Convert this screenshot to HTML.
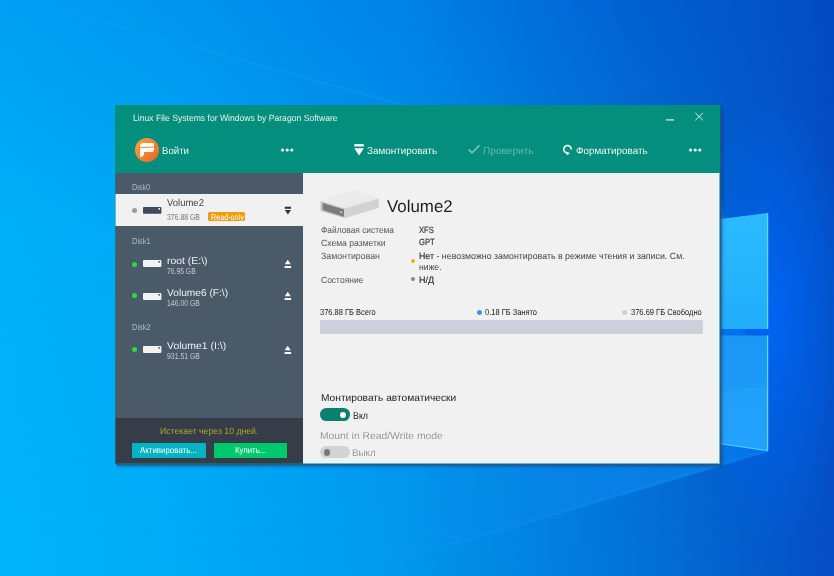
<!DOCTYPE html>
<html><head><meta charset="utf-8">
<style>
*{margin:0;padding:0;box-sizing:border-box}
html,body{width:834px;height:576px;overflow:hidden;font-family:"Liberation Sans",sans-serif}
body{position:relative;background:#0a7ee0}
#bg{position:absolute;left:0;top:0}
#win{position:absolute;left:115px;top:105px;width:605px;height:359px;background:#038e7d;box-shadow:1px 1px 0 rgba(40,90,130,.8),2px 2px 1.5px rgba(30,70,110,.5),3px 3px 3px rgba(0,30,80,.18)}
.t{position:absolute;white-space:nowrap;line-height:1;transform-origin:0 0;text-rendering:geometricPrecision}
.b{position:absolute}
.dot{position:absolute;border-radius:50%}
</style></head><body>
<svg id="bg" width="834" height="576" viewBox="0 0 834 576">
<defs>
<linearGradient id="gt" x1="0" y1="0" x2="834" y2="0" gradientUnits="userSpaceOnUse">
<stop offset="0" stop-color="#00a0f4"/>
<stop offset="0.24" stop-color="#0094ee"/>
<stop offset="0.485" stop-color="#0082e6"/>
<stop offset="0.75" stop-color="#0262d2"/>
<stop offset="1" stop-color="#034bc0"/>
</linearGradient>
<linearGradient id="gb" x1="0" y1="0" x2="834" y2="0" gradientUnits="userSpaceOnUse">
<stop offset="0" stop-color="#00b4f8"/>
<stop offset="0.24" stop-color="#00aaf6"/>
<stop offset="0.485" stop-color="#0098ec"/>
<stop offset="0.75" stop-color="#0274d8"/>
<stop offset="1" stop-color="#044ec2"/>
</linearGradient>
<linearGradient id="gm" x1="0" y1="0" x2="0" y2="576" gradientUnits="userSpaceOnUse">
<stop offset="0" stop-color="#000"/>
<stop offset="0.4" stop-color="#ccc"/>
<stop offset="1" stop-color="#fff"/>
</linearGradient>
<mask id="mb"><rect width="834" height="576" fill="url(#gm)"/></mask>
<radialGradient id="glow" cx="772" cy="320" r="1" gradientTransform="translate(772 320) scale(80 230) translate(-772 -320)" gradientUnits="userSpaceOnUse">
<stop offset="0" stop-color="#0064f4" stop-opacity="0.95"/>
<stop offset="1" stop-color="#0064f4" stop-opacity="0"/>
</radialGradient>
<linearGradient id="pu" x1="0" y1="213" x2="0" y2="329" gradientUnits="userSpaceOnUse">
<stop offset="0" stop-color="#2abaff"/>
<stop offset="1" stop-color="#22aefa"/>
</linearGradient>
<linearGradient id="pl" x1="0" y1="335" x2="0" y2="451" gradientUnits="userSpaceOnUse">
<stop offset="0" stop-color="#1b98f4"/>
<stop offset="1" stop-color="#1e9efc"/>
</linearGradient>
<linearGradient id="fan" x1="350" y1="0" x2="768" y2="0" gradientUnits="userSpaceOnUse">
<stop offset="0" stop-color="#1290f2" stop-opacity="0"/>
<stop offset="1" stop-color="#0a8cf2" stop-opacity="0.7"/>
</linearGradient>
</defs>
<rect width="834" height="576" fill="url(#gt)"/>
<rect width="834" height="576" fill="url(#gb)" mask="url(#mb)"/>
<polygon points="768,452 300,592 0,592 0,-7 720,193" fill="url(#fan)"/>
<line x1="-10" y1="-9.8" x2="720" y2="193" stroke="#10a6f8" stroke-width="2" opacity="0.3"/>
<line x1="768" y1="450" x2="346" y2="576" stroke="#1aa0f0" stroke-width="2" opacity="0.18"/>
<rect x="690" y="90" width="144" height="460" fill="url(#glow)"/>
<polygon points="712,220.6 768,213.2 768,329 712,329" fill="url(#pu)"/>
<polygon points="712,335.5 768,335.5 768,450.5 712,442.3" fill="url(#pl)"/>
<polygon points="712,393 768,385.5 768,450.5 712,442.3" fill="#2aa8ff" opacity="0.35"/>
<line x1="767.6" y1="213.5" x2="767.6" y2="329" stroke="#5cdcff" stroke-width="1.3"/>
<line x1="767.6" y1="335.5" x2="767.6" y2="450.5" stroke="#5cdcff" stroke-width="1.3"/>
<line x1="712" y1="442.5" x2="768" y2="450.6" stroke="#4cd0ff" stroke-width="1.2"/>
<line x1="712" y1="220.6" x2="768" y2="213.3" stroke="#48c8ff" stroke-width="0.8" opacity="0.7"/>
</svg>

<div id="win">
  <!-- title bar -->
  <svg class="b" style="left:548px;top:6px" width="45" height="14" viewBox="0 0 45 14">
    <rect x="2.8" y="8.25" width="8.2" height="1.3" fill="#cfe9e5"/>
    <path d="M32.4 2.0 L39.9 9.3 M39.9 2.0 L32.4 9.3" stroke="#e6f3f1" stroke-width="1" fill="none"/>
  </svg>

  <!-- toolbar -->
  <svg class="b" style="left:20px;top:33px" width="24" height="24" viewBox="0 0 24 24">
    <defs><linearGradient id="og" x1="0" y1="0" x2="1" y2="1"><stop offset="0" stop-color="#f9a640"/><stop offset="1" stop-color="#ec6224"/></linearGradient></defs>
    <circle cx="12" cy="12" r="12" fill="url(#og)"/>
    <path d="M5.1 9.2 L5.1 8.3 Q5.1 5.1 8.3 5.1 L17.2 5.1 Q19 5.1 19 6.9 L19 8.6 Z" fill="#fff"/><path d="M5.1 10.2 L19 9.6 L19 11.7 Q19 14.1 16.6 14.1 L9.1 14.1 L9.1 15 Q9.1 18.4 5.9 19 Q5.1 19.1 5.1 18.2 Z" fill="#fff"/>
  </svg>
  <svg class="b" style="left:165px;top:42px" width="15" height="6" viewBox="0 0 15 6">
    <circle cx="2.6" cy="3" r="1.6" fill="#fff"/><circle cx="7.2" cy="3" r="1.6" fill="#fff"/><circle cx="11.8" cy="3" r="1.6" fill="#fff"/>
  </svg>
  <svg class="b" style="left:238px;top:38px" width="12" height="14" viewBox="0 0 12 14">
    <rect x="1.3" y="1.1" width="9.5" height="2.4" fill="#fff"/>
    <path d="M1.3 5.2 L10.8 5.2 L6.05 12.6 Z" fill="#fff"/>
  </svg>
  <svg class="b" style="left:352px;top:39px" width="14" height="11" viewBox="0 0 14 11">
    <path d="M1.8 5.5 L5 8.8 L12.6 1.2" stroke="#6fc3b7" stroke-width="1.8" fill="none"/>
  </svg>
  <svg class="b" style="left:445px;top:37px" width="16" height="16" viewBox="0 0 16 16">
    <path d="M11.25 7.4 A3.75 3.75 0 1 0 7.6 11.05" stroke="#fff" stroke-width="1.6" fill="none"/>
    <path d="M6.5 9.5 L10 11.3 L6.7 13.2 Z" fill="#fff"/>
  </svg>
  <svg class="b" style="left:573px;top:42px" width="15" height="6" viewBox="0 0 15 6">
    <circle cx="2.6" cy="3" r="1.6" fill="#fff"/><circle cx="7.2" cy="3" r="1.6" fill="#fff"/><circle cx="11.8" cy="3" r="1.6" fill="#fff"/>
  </svg>

  <!-- sidebar -->
  <div class="b" style="left:0;top:68px;width:188px;height:291px;background:#4a5a69"></div>
  <div class="b" style="left:0;top:89px;width:188px;height:32px;background:#f1f1f1"></div>
  <div class="dot" style="left:17.2px;top:102.8px;width:5px;height:5px;background:#9a9a9a"></div>
  <svg class="b" style="left:27.7px;top:101.8px" width="19" height="7" viewBox="0 0 19 7"><rect x="0" y="0" width="18.4" height="6.7" rx="0.8" fill="#3e4b5a"/><rect x="15.4" y="1" width="1.6" height="1.6" fill="#fff"/></svg>
  <div class="b" style="left:93.2px;top:106.8px;width:37.1px;height:9.4px;background:#f09c0c;border-radius:1.5px"></div>
  <svg class="b" style="left:169px;top:100.5px" width="8" height="10" viewBox="0 0 8 10"><rect x="0.8" y="0.7" width="6.2" height="2.1" fill="#333"/><path d="M0.8 3.9 L7 3.9 L3.9 8.6 Z" fill="#333"/></svg>

  <div class="dot" style="left:17.2px;top:156.7px;width:5px;height:5px;background:#22dd44"></div>
  <svg class="b" style="left:27.7px;top:155.4px" width="19" height="7" viewBox="0 0 19 7"><rect x="0" y="0" width="18.4" height="6.9" rx="0.8" fill="#f2f2f2"/><rect x="15.4" y="1" width="1.6" height="1.6" fill="#4a5a69"/></svg>
  <svg class="b" style="left:169px;top:154px" width="8" height="10" viewBox="0 0 8 10"><path d="M0.7 5.2 L6.7 5.2 L3.7 0.7 Z" fill="#fff"/><rect x="0.6" y="7.0" width="6.5" height="2.0" fill="#fff"/></svg>

  <div class="dot" style="left:17.2px;top:188.4px;width:5px;height:5px;background:#22dd44"></div>
  <svg class="b" style="left:27.7px;top:187.6px" width="19" height="7" viewBox="0 0 19 7"><rect x="0" y="0" width="18.4" height="6.9" rx="0.8" fill="#f2f2f2"/><rect x="15.4" y="1" width="1.6" height="1.6" fill="#4a5a69"/></svg>
  <svg class="b" style="left:169px;top:186px" width="8" height="10" viewBox="0 0 8 10"><path d="M0.7 5.2 L6.7 5.2 L3.7 0.7 Z" fill="#fff"/><rect x="0.6" y="7.0" width="6.5" height="2.0" fill="#fff"/></svg>

  <div class="dot" style="left:17.2px;top:242.4px;width:5px;height:5px;background:#22dd44"></div>
  <svg class="b" style="left:27.7px;top:241.2px" width="19" height="7" viewBox="0 0 19 7"><rect x="0" y="0" width="18.4" height="6.9" rx="0.8" fill="#f2f2f2"/><rect x="15.4" y="1" width="1.6" height="1.6" fill="#4a5a69"/></svg>
  <svg class="b" style="left:169px;top:240px" width="8" height="10" viewBox="0 0 8 10"><path d="M0.7 5.2 L6.7 5.2 L3.7 0.7 Z" fill="#fff"/><rect x="0.6" y="7.0" width="6.5" height="2.0" fill="#fff"/></svg>

  <!-- footer -->
  <div class="b" style="left:0;top:313px;width:188px;height:46px;background:#363d48"></div>
  <div class="b" style="left:17.1px;top:337.6px;width:73.6px;height:15.2px;background:#02b3c3"></div>
  <div class="b" style="left:98.6px;top:337.6px;width:73.4px;height:15.2px;background:#00c86c"></div>

  <!-- main -->
  <div class="b" style="left:188px;top:68px;width:417px;height:291px;background:#f1f1f1"></div>
  <svg class="b" style="left:203px;top:82px" width="64" height="34" viewBox="0 0 64 34">
    <path d="M2.5 13.9 L36.4 2.6 L60.8 11.4 L26.8 21.5 Z" fill="#ebebeb"/>
    <path d="M26.8 21.5 L60.8 11.4 L60.8 20.7 L26.8 31.2 Z" fill="#d2d2d2"/>
    <path d="M2.5 13.9 L26.8 21.5 L26.8 31.2 L2.5 24.0 Z" fill="#c4c4c4"/>
    <path d="M4.7 15.9 L26 22.6 L26 29.7 L4.7 22.9 Z" fill="#7b7b7b"/>
    <rect x="22.4" y="24.4" width="1.6" height="1.6" fill="#e0e0e0"/>
  </svg>

  <div class="dot" style="left:295.7px;top:153.8px;width:4px;height:4px;background:#f5a623"></div>
  <div class="dot" style="left:295.6px;top:171.8px;width:4px;height:4px;background:#888"></div>

  <div class="dot" style="left:362.2px;top:204.5px;width:5px;height:5px;background:#4a90e2"></div>
  <div class="dot" style="left:507.4px;top:204.5px;width:5px;height:5px;background:#cbd1dc"></div>
  <div class="b" style="left:204.6px;top:214.8px;width:383.5px;height:14px;background:#cbd0db;border-radius:1.5px"></div>

  <div class="b" style="left:205px;top:303.4px;width:29.5px;height:12.6px;background:#0a806f;border-radius:6.3px"></div>
  <div class="dot" style="left:224.8px;top:306.6px;width:6.3px;height:6.3px;background:#fff"></div>
  <div class="b" style="left:205px;top:340.6px;width:29.5px;height:12.8px;background:#d3d3d3;border-radius:6.4px"></div>
  <div class="dot" style="left:208.6px;top:344.3px;width:6.3px;height:6.3px;background:#7a7a7a"></div>
  <div class="t" id="title" style="left:17.80px;top:9.35px;font-size:9.0px;color:#e6f3f1;transform:scaleX(0.9556)">Linux File Systems for Windows by Paragon Software</div>
  <div class="t" id="voiti" style="left:47.00px;top:41.50px;font-size:10.0px;color:#eef7f6;transform:scaleX(0.9654)">Войти</div>
  <div class="t" id="mount" style="left:252.40px;top:41.50px;font-size:10.0px;color:#eef7f6;transform:scaleX(0.9862)">Замонтировать</div>
  <div class="t" id="check" style="left:367.60px;top:41.50px;font-size:10.0px;color:#66bbae;transform:scaleX(1.0107)">Проверить</div>
  <div class="t" id="format" style="left:461.20px;top:41.50px;font-size:10.0px;color:#eef7f6;transform:scaleX(0.9865)">Форматировать</div>
  <div class="t" id="disk0" style="left:17.40px;top:77.61px;font-size:8.7px;color:#b0b9c1;transform:scaleX(0.8360)">Disk0</div>
  <div class="t" id="vol2" style="left:52.40px;top:93.50px;font-size:10.0px;color:#444444;transform:scaleX(0.9487)">Volume2</div>
  <div class="t" id="sz2" style="left:52.40px;top:107.61px;font-size:8.7px;color:#777777;transform:scaleX(0.7931)">376.88 GB</div>
  <div class="t" id="ro" style="left:95.60px;top:107.69px;font-size:8.6px;color:#ffffff;transform:scaleX(0.8381)">Read-only</div>
  <div class="t" id="disk1" style="left:17.20px;top:131.60px;font-size:8.7px;color:#b0b9c1;transform:scaleX(0.8602)">Disk1</div>
  <div class="t" id="root" style="left:52.40px;top:151.50px;font-size:10.0px;color:#eef0f2;transform:scaleX(1.0409)">root (E:\)</div>
  <div class="t" id="sz_root" style="left:52.40px;top:161.60px;font-size:8.7px;color:#c2c9cf;transform:scaleX(0.7806)">76.95 GB</div>
  <div class="t" id="vol6" style="left:52.40px;top:183.50px;font-size:10.0px;color:#eef0f2;transform:scaleX(1.0172)">Volume6 (F:\)</div>
  <div class="t" id="sz6" style="left:52.40px;top:193.60px;font-size:8.7px;color:#c2c9cf;transform:scaleX(0.7931)">146.00 GB</div>
  <div class="t" id="disk2" style="left:17.20px;top:217.60px;font-size:8.7px;color:#b0b9c1;transform:scaleX(0.8602)">Disk2</div>
  <div class="t" id="vol1" style="left:52.40px;top:236.50px;font-size:10.0px;color:#eef0f2;transform:scaleX(1.0443)">Volume1 (I:\)</div>
  <div class="t" id="sz1" style="left:52.40px;top:246.60px;font-size:8.7px;color:#c2c9cf;transform:scaleX(0.7931)">931.51 GB</div>
  <div class="t" id="expire" style="left:44.80px;top:322.35px;font-size:9.0px;color:#a9a72a;transform:scaleX(0.9655)">Истекает через 10 дней.</div>
  <div class="t" id="act" style="left:25.40px;top:340.69px;font-size:8.6px;color:#ffffff;transform:scaleX(0.9199)">Активировать...</div>
  <div class="t" id="buy" style="left:120.00px;top:340.69px;font-size:8.6px;color:#ffffff;transform:scaleX(0.9129)">Купить...</div>
  <div class="t" id="bigvol" style="left:271.80px;top:92.55px;font-size:17.0px;color:#1e1e1e;transform:scaleX(0.9928)">Volume2</div>
  <div class="t" id="l_fs" style="left:206.40px;top:121.35px;font-size:9.0px;color:#555555;transform:scaleX(0.9298)">Файловая система</div>
  <div class="t" id="l_part" style="left:206.40px;top:134.35px;font-size:9.0px;color:#555555;transform:scaleX(0.9552)">Схема разметки</div>
  <div class="t" id="l_mnt" style="left:206.40px;top:147.35px;font-size:9.0px;color:#555555;transform:scaleX(0.9754)">Замонтирован</div>
  <div class="t" id="l_st" style="left:206.40px;top:171.35px;font-size:9.0px;color:#555555;transform:scaleX(0.9440)">Состояние</div>
  <div class="t" id="v_fs" style="left:304.20px;top:121.35px;font-size:9.0px;color:#333333;-webkit-text-stroke:.18px #333;transform:scaleX(0.8405)">XFS</div>
  <div class="t" id="v_part" style="left:304.20px;top:133.35px;font-size:9.0px;color:#333333;-webkit-text-stroke:.18px #333;transform:scaleX(0.8485)">GPT</div>
  <div class="t" id="v_mnt" style="left:304.20px;top:147.35px;font-size:9.0px;color:#444444;transform:scaleX(0.9797)"><span style="color:#333;-webkit-text-stroke:.18px #333">Нет</span> - невозможно замонтировать в режиме чтения и записи. См.</div>
  <div class="t" id="v_mnt2" style="left:304.20px;top:158.35px;font-size:9.0px;color:#444444;transform:scaleX(0.9590)">ниже.</div>
  <div class="t" id="v_st" style="left:304.20px;top:171.35px;font-size:9.0px;color:#333333;-webkit-text-stroke:.18px #333;transform:scaleX(1.0051)">Н/Д</div>
  <div class="t" id="u_tot" style="left:205.20px;top:202.60px;font-size:8.7px;color:#222222;transform:scaleX(0.8619)">376.88 ГБ Всего</div>
  <div class="t" id="u_used" style="left:370.40px;top:202.60px;font-size:8.7px;color:#222222;transform:scaleX(0.8610)">0.18 ГБ Занято</div>
  <div class="t" id="u_free" style="left:516.00px;top:202.60px;font-size:8.7px;color:#222222;transform:scaleX(0.8659)">376.69 ГБ Свободно</div>
  <div class="t" id="automount" style="left:206.20px;top:288.50px;font-size:10.0px;color:#222222;transform:scaleX(1.0190)">Монтировать автоматически</div>
  <div class="t" id="on" style="left:238.20px;top:306.50px;font-size:10.0px;color:#222222;transform:scaleX(0.8834)">Вкл</div>
  <div class="t" id="rw" style="left:205.20px;top:326.50px;font-size:10.0px;color:#999999;transform:scaleX(1.0340)">Mount in Read/Write mode</div>
  <div class="t" id="off" style="left:237.20px;top:343.50px;font-size:10.0px;color:#999999;transform:scaleX(0.9816)">Выкл</div>
  <div class="b" style="left:0;top:0;width:605px;height:359px;border:1px solid rgba(3,142,125,.55)"></div>
</div>
</body></html>
